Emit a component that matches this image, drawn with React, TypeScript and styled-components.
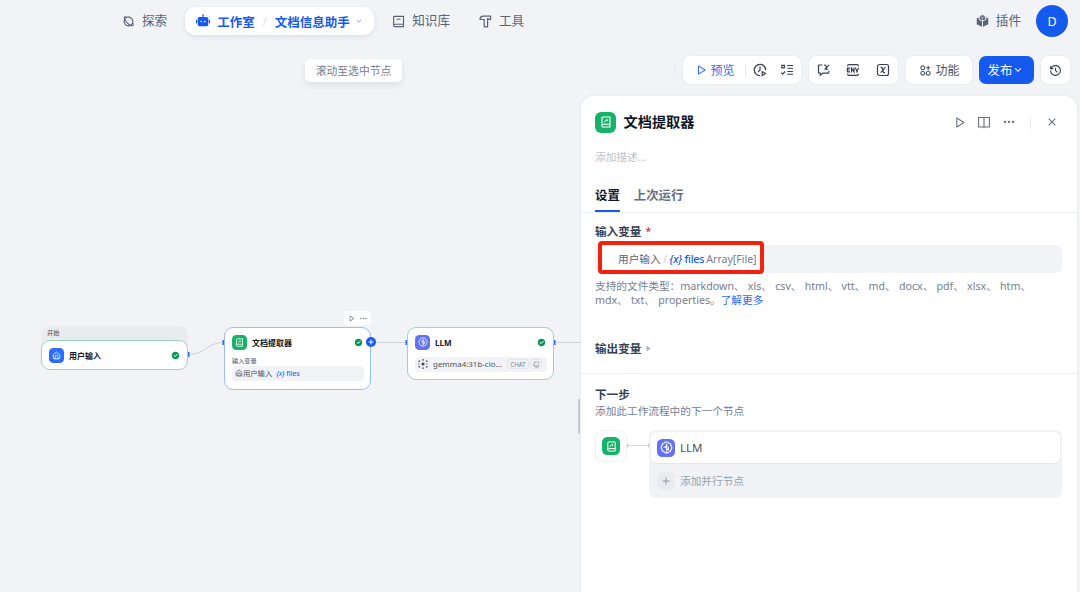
import React from "react";
import styled, { createGlobalStyle, css } from "styled-components";
import {
  RiApps2AddLine,
  RiArrowDownSLine,
  RiCheckboxCircleFill,
  RiCloseLine,
  RiHistoryLine,
  RiMoreFill,
  RiPlanetLine,
  RiPlayLargeLine,
  RiRobot2Fill,
} from "react-icons/ri";

const Global = createGlobalStyle`
  *, *::before, *::after { box-sizing: border-box; }
  html, body { margin: 0; height: 100%; overflow: hidden; }
  body {
    background: #f1f3f7;
    color: #354052;
    font-family: "Noto Sans", "Noto Sans CJK SC", sans-serif;
    font-size: 10.67px;
  }
  svg { display: block; flex: none; }
`;

const Page = styled.div`
  display: flex;
  flex-direction: column;
  width: 1080px;
  height: 592px;
  overflow: hidden;
`;

/* ---------- header ---------- */
const Header = styled.header`
  display: flex;
  align-items: center;
  height: 42px;
  padding: 0 12px 0 122px;
  flex: none;
`;
const NavItem = styled.a<{ $gap?: number; $ml?: number }>`
  display: flex;
  align-items: center;
  gap: ${(p) => p.$gap ?? 7}px;
  margin-left: ${(p) => p.$ml ?? 0}px;
  color: #5a6475;
  font-size: 12.6px;
  line-height: 18px;
  white-space: nowrap;
`;
const ActiveNav = styled.div`
  display: flex;
  align-items: center;
  width: 189px;
  height: 28px;
  margin-left: 18px;
  padding: 0 8px 0 11px;
  border-radius: 10px;
  background: #fff;
  box-shadow: 0 2px 5px rgba(16, 24, 40, 0.09);
  color: #155aef;
  font-size: 12.5px;
  font-weight: 700;
  white-space: nowrap;
`;
const ActiveLabel = styled.span`
  margin-left: 7px;
`;
const AppLabel = styled.span`
  margin-right: 4px;
`;
const Slash = styled.span`
  width: 20px;
  text-align: center;
  color: #dfe2e9;
  font-weight: 400;
`;
const Spacer = styled.div`
  flex: 1;
`;
const Avatar = styled.div`
  display: flex;
  align-items: center;
  justify-content: center;
  width: 32px;
  height: 32px;
  margin-left: 15px;
  border-radius: 50%;
  background: #155aef;
  color: #fff;
  font-size: 12.5px;
`;

/* ---------- toolbar ---------- */
const Toolbar = styled.div`
  display: flex;
  align-items: center;
  height: 54px;
  padding: 2px 10px 0 305px;
  flex: none;
`;
const ScrollChip = styled.button`
  width: 97px;
  height: 23px;
  padding: 0;
  border: 0;
  border-radius: 5px;
  background: #fff;
  box-shadow: 0 3px 6px rgba(16, 24, 40, 0.09);
  color: #767e90;
  font: inherit;
  font-size: 10.8px;
`;
const Group = styled.div<{ $w: number; $ml?: number }>`
  display: flex;
  align-items: center;
  width: ${(p) => p.$w}px;
  height: 28px;
  margin-left: ${(p) => p.$ml ?? 8}px;
  border-radius: 7px;
  background: #fff;
  box-shadow: 0 0 1.5px rgba(16, 24, 40, 0.12);
  color: #354052;
`;
const Cell = styled.span<{ $w: number }>`
  display: flex;
  justify-content: center;
  width: ${(p) => p.$w}px;
`;
const PreviewButton = styled.span`
  display: flex;
  align-items: center;
  gap: 4px;
  width: 62px;
  padding-left: 12px;
  color: #2f6cf1;
  font-size: 12px;
  white-space: nowrap;
`;
const Rule = styled.i<{ $h: number }>`
  width: 1px;
  height: ${(p) => p.$h}px;
  background: #e6e8ec;
`;
const Feature = styled.span`
  display: flex;
  align-items: center;
  gap: 4px;
  padding-left: 13px;
  color: #495464;
  font-size: 12px;
`;
const Publish = styled.button`
  display: flex;
  align-items: center;
  justify-content: center;
  width: 55px;
  height: 28px;
  margin-left: 7px;
  padding: 0;
  border: 0;
  border-radius: 7px;
  background: #155aef;
  color: #fff;
  font: inherit;
  font-size: 12.4px;
`;

/* ---------- canvas ---------- */
const Workspace = styled.div`
  display: flex;
  flex: 1;
  min-height: 0;
  padding-right: 3px;
`;
const Canvas = styled.div`
  position: relative;
  flex: 1;
  overflow: hidden;
`;
const Edges = styled.svg`
  position: absolute;
  left: 0;
  top: 0;
`;
const StartWrap = styled.div`
  position: absolute;
  left: 41px;
  top: 230px;
  width: 147px;
  height: 44px;
  border-radius: 9px;
  background: #e9ebee;
`;
const StartLabel = styled.div`
  height: 14px;
  padding: 1px 0 0 6px;
  color: #5a6475;
  font-size: 6.2px;
  font-weight: 500;
  line-height: 12px;
`;
const nodeBox = css`
  border: 1px solid #9bd6ba;
  border-radius: 9px;
  background: #fff;
`;
const StartNode = styled.div`
  ${nodeBox}
  height: 30px;
  padding: 6.5px 7px 0;
`;
const Node = styled.div<{ $x: number; $h: number; $selected?: boolean }>`
  ${nodeBox}
  position: absolute;
  left: ${(p) => p.$x}px;
  top: 231px;
  width: 147px;
  height: ${(p) => p.$h}px;
  padding: 6.5px 7px;
  border-color: ${(p) => (p.$selected ? "#9dbdf8" : "#9bd6ba")};
`;
const NodeHead = styled.div`
  display: flex;
  align-items: center;
  height: 15px;
  gap: 5px;
  color: #101828;
  font-size: 8px;
  font-weight: 700;
  white-space: nowrap;
`;
const Tile = styled.span<{ $size: number; $bg: string }>`
  display: flex;
  align-items: center;
  justify-content: center;
  flex: none;
  width: ${(p) => p.$size}px;
  height: ${(p) => p.$size}px;
  border-radius: ${(p) => p.$size * 0.29}px;
  background: ${(p) => p.$bg};
  color: #fff;
`;
const NodeLabel = styled.div`
  margin-top: 6px;
  height: 9px;
  color: #676f83;
  font-size: 6.2px;
  font-weight: 500;
  line-height: 9px;
`;
const NodeField = styled.div<{ $mt?: number }>`
  display: flex;
  align-items: center;
  height: 15px;
  width: 132px;
  margin-top: ${(p) => p.$mt ?? 1}px;
  padding: 0 3px;
  border-radius: 4px;
  background: #f1f3f6;
  color: #495464;
  font-size: 7.3px;
  white-space: nowrap;
`;
const VarName = styled.span<{ $ml?: number }>`
  margin-left: ${(p) => p.$ml ?? 0}px;
  color: #155aef;
  letter-spacing: -0.1px;
`;
const ModelName = styled.span`
  width: 74px;
  margin-left: 5px;
  font-size: 7.95px;
`;
const Badge = styled.span<{ $w: number }>`
  display: flex;
  align-items: center;
  justify-content: center;
  width: ${(p) => p.$w}px;
  height: 10px;
  margin-right: 1px;
  border: 1px solid #e2e5ea;
  border-radius: 3px;
  color: #767e90;
  font-size: 6.2px;
`;
const NodeTools = styled.div`
  position: absolute;
  left: 344px;
  top: 215px;
  display: flex;
  align-items: center;
  justify-content: center;
  gap: 4px;
  width: 27px;
  height: 14px;
  border-radius: 4px;
  background: #fff;
  color: #676f83;
`;
const AddDot = styled.span`
  position: absolute;
  left: 366px;
  top: 241px;
  display: flex;
  align-items: center;
  justify-content: center;
  width: 10px;
  height: 10px;
  border-radius: 50%;
  background: #155aef;
`;
const ResizeHandle = styled.i`
  position: absolute;
  left: 578px;
  top: 303px;
  width: 2px;
  height: 35px;
  border-radius: 1px;
  background: #c3c7cf;
`;

/* ---------- panel ---------- */
const Panel = styled.aside`
  width: 496px;
  flex: none;
  border-radius: 13px 13px 0 0;
  background: #fff;
  box-shadow: 0 0 3px rgba(16, 24, 40, 0.07);
`;
const PanelHead = styled.div`
  display: flex;
  align-items: center;
  height: 22px;
  margin: 15px 13px 0 14px;
  color: #676f83;
`;
const PanelTitle = styled.h1`
  flex: 1;
  margin: 0 0 0 7.5px;
  color: #101828;
  font-size: 14.2px;
  line-height: 22px;
  font-weight: 700;
`;
const Actions = styled.div`
  display: flex;
  align-items: center;
`;
const Description = styled.div`
  margin: 16px 14px 0;
  height: 17px;
  color: #bcc1cb;
  font-size: 10.67px;
  line-height: 17px;
`;
const Tabs = styled.div`
  display: flex;
  gap: 14px;
  height: 38px;
  margin-top: 9px;
  padding: 0 14px;
  border-bottom: 1px solid #eceef1;
`;
const Tab = styled.div<{ $active?: boolean }>`
  height: 37px;
  padding-top: 7px;
  border-bottom: 2px solid ${(p) => (p.$active ? "#155aef" : "transparent")};
  color: ${(p) => (p.$active ? "#101828" : "#676f83")};
  font-size: 12.4px;
  font-weight: 700;
  line-height: 27px;
`;
const Section = styled.section<{ $h?: number }>`
  ${(p) => p.$h && css`height: ${p.$h}px; border-bottom: 1px solid #eceef1;`}
  padding: 9px 14px 0;
`;
const FieldTitle = styled.div`
  display: flex;
  align-items: center;
  height: 17px;
  color: #354052;
  font-size: 11.6px;
  font-weight: 700;
`;
const Required = styled.span`
  margin-left: 4px;
  color: #d92d20;
  font-size: 10.5px;
  font-weight: 500;
`;
const VarField = styled.div`
  display: flex;
  align-items: center;
  height: 28px;
  width: 467px;
  margin-top: 6px;
  border-radius: 6px;
  background: #f1f3f6;
`;
const Highlight = styled.div`
  display: flex;
  align-items: center;
  flex: none;
  width: 166px;
  height: 33px;
  margin: -4px 0 -1px 3px;
  padding: 2px 0 0 16px;
  border: 4px solid #f6200f;
  border-radius: 4px;
  background: #fff;
  color: #5a6475;
  font-size: 10.67px;
  white-space: nowrap;
`;
const Divider = styled.span`
  margin: 0 2.5px;
  color: #c8ccd4;
`;
const FieldVar = styled.span`
  margin-right: 2px;
  color: #155aef;
  font-weight: 500;
  letter-spacing: -0.2px;
`;
const TypeName = styled.span`
  color: #767e90;
  letter-spacing: -0.05px;
`;
const Help = styled.div`
  margin-top: 5px;
  color: #767e90;
  font-size: 10.67px;
  word-spacing: 0.4px;
`;
const HelpLine = styled.div`
  display: flex;
  align-items: center;
  height: 14.3px;
  white-space: nowrap;
`;
const HelpLink = styled.a`
  color: #2f6cf1;
`;
const OutputTitle = styled(FieldTitle)`
  margin-top: 33px;
  gap: 5px;
`;
const NextTitle = styled(FieldTitle)`
  margin-top: 2px;
`;
const NextHint = styled.div`
  height: 18px;
  color: #767e90;
  font-size: 10.67px;
  line-height: 19px;
`;
const NextRow = styled.div`
  display: flex;
  margin-top: 10px;
`;
const CurrentNode = styled.div`
  display: flex;
  align-items: center;
  justify-content: center;
  width: 32px;
  height: 32px;
  border: 1px solid #f0f1f4;
  border-radius: 8px;
  background: #fff;
`;
const NextList = styled.div`
  flex: none;
  width: 413px;
  height: 68px;
  padding: 2px;
  border-radius: 7px;
  background: #f0f2f5;
`;
const NextItem = styled.div`
  display: flex;
  align-items: center;
  height: 31px;
  padding-left: 6px;
  gap: 5px;
  border-radius: 6px;
  background: #fff;
  box-shadow: 0 1px 1px rgba(16, 24, 40, 0.05);
  color: #495464;
  font-size: 11.5px;
`;
const AddParallel = styled.div`
  display: flex;
  align-items: center;
  height: 35px;
  padding-left: 6px;
  gap: 5px;
  color: #98a0ae;
`;

/* ---------- drawings ---------- */
const BookIcon = () => (
  <svg width="13" height="13" viewBox="0 0 13 13" fill="none" stroke="currentColor" strokeWidth="1.15">
    <path d="M1.600 10.300V2.400c0-.7.300-1 1-1h8.900v10.200H2.900c-.8 0-1.300-.5-1.300-1.200s.5-1.200 1.300-1.200h8.600M4.600 4.200h3.900" />
  </svg>
);
const HomeIcon = ({ s }: { s: number }) => (
  <svg width={s} height={s} viewBox="0 0 12 12" fill="none" stroke="currentColor" strokeWidth="1.1">
    <path d="M1.700 5 6 1.400 10.300 5v4.200c0 .9-.4 1.300-1.300 1.300H3c-.9 0-1.300-.4-1.300-1.300Z" />
    <path d="M4.200 10.500V7.300a1.800 1.800 0 0 1 3.600 0v3.200" />
  </svg>
);
const ExtractIcon = ({ s }: { s: number }) => (
  <svg width={s} height={s} viewBox="0 0 12 12" fill="none" stroke="currentColor" strokeWidth="1.05">
    <path d="M2 9.800V2.200C2 1.500 2.400 1 3.100 1H10v10H3.100C2.400 11 2 10.500 2 9.800ZM2 9.500c0-.8.500-1.200 1.200-1.200H10" />
    <path d="M4.600 6.300c0-1.400.6-2 1.600-2h1.300M6.500 3.100l1.200 1.200-1.200 1.100" strokeWidth=".9" />
  </svg>
);
const LlmIcon = ({ s }: { s: number }) => (
  <svg width={s} height={s} viewBox="0 0 14 14" fill="none" stroke="currentColor" strokeWidth="1.2">
    <path d="M7 1.300C5.800.9 4.700 1.400 4.200 2.400 2.800 2.600 2 3.700 2.300 5 1 5.900.9 7.800 2.100 8.800c-.2 1.500.8 2.600 2.200 2.800.6 1 1.600 1.400 2.700 1.100 1.100.3 2.100-.1 2.700-1.100 1.400-.2 2.400-1.300 2.200-2.800 1.200-1 1.100-2.900-.2-3.800.3-1.300-.5-2.400-1.900-2.600C9.300 1.400 8.200.9 7 1.300Z" />
    <path d="M7.200 3v8.500M7.200 5 5 6.800h2.200M7.200 9H9V6" />
  </svg>
);
const HammerIcon = () => (
  <svg width="13" height="13" viewBox="0 0 13 13" fill="none" stroke="currentColor" strokeWidth="1.2" strokeLinejoin="round">
    <path d="M.9 4.200C1.300 2.200 2.300 1.200 4 1.200h7.600v3.200H9.900l-1.300-.8v8.200H5.200V4.500H3.300Z" />
  </svg>
);
const CubesIcon = () => (
  <svg width="13" height="14" viewBox="0 0 14 14" fill="currentColor">
    <path d="M7 .5 10 2v3L7 6.500 4 5V2Z" />
    <path d="m.8 4.200 2.200-1V5.600L6.500 7.300v6L.8 10.500ZM13.200 4.200l-2.200-1V5.600L7.500 7.300v6l5.700-2.800Z" />
    <path d="m4 2 3 1.500L10 2M7 3.500v3" stroke="#f1f3f7" strokeWidth=".6" fill="none" />
  </svg>
);
const ClockPlayIcon = () => (
  <svg width="14" height="14" viewBox="0 0 14 14" fill="none" stroke="currentColor" strokeWidth="1.25">
    <path d="M7.200 12.700A5.700 5.700 0 1 1 12.700 7M7 3.500v3.800l-2 1.500" />
    <path d="M9.200 8.600v3.900l3.300-1.950Z" strokeWidth="1.100" />
  </svg>
);
const ChecklistIcon = () => (
  <svg width="14" height="14" viewBox="0 0 14 14" fill="none" stroke="currentColor" strokeWidth="1.15">
    <path d="M1.800 2.300h2.600v2.500H1.800zM1.200 9.700l1.400 1.400 2.500-2.600M7.300 2.500H13M7.300 5.200H13M7.300 8.500H13M7.300 11.200H13" />
  </svg>
);
const ChatVarIcon = () => (
  <svg width="14" height="14" viewBox="0 0 14 14" fill="none" stroke="currentColor" strokeWidth="1.2">
    <path d="M5.500 2H2.500c-.7 0-1 .3-1 1v6.200c0 .7.300 1 1 1h.7v2L6 10.200h4.800c.7 0 1-.3 1-1V8" />
    <path d="M7.200 2.100h.8c.6 0 .8.300 1 1l.5 2.500c.1.600.4.900 1 .9h.7M12.300 2c-1.200 0-3.500 4.500-4.900 4.500" />
  </svg>
);
const EnvIcon = () => (
  <svg width="14" height="14" viewBox="0 0 14 14" fill="none" stroke="currentColor" strokeWidth="1.200">
    <path d="M1.500 3.300c0-1.300.3-1.600 1.500-1.600h8c1.200 0 1.500.3 1.500 1.600M1.500 10.700c0 1.300.3 1.600 1.500 1.600h8c1.200 0 1.500-.3 1.500-1.600" />
    <path d="M4 5.100H1.400v3.800H4M1.400 7H3.800M5.500 9.400V5.200l2.500 3.600V4.600M9.400 4.600l1.600 4.200 1.600-4.200" />
  </svg>
);
const GlobalVarIcon = () => (
  <svg width="14" height="14" viewBox="0 0 14 14" fill="none" stroke="currentColor" strokeWidth="1.2">
    <rect x="1.500" y="1.500" width="11" height="11" rx="2" />
    <path d="M4.500 4.300h.7c.6 0 .9.300 1.100.9l1 3.500c.2.600.5.900 1.100.9h.7M9.500 4.300c-1.400 0-3.500 5.300-5 5.300" />
  </svg>
);
const SplitIcon = () => (
  <svg width="14" height="14" viewBox="0 0 14 14" fill="none" stroke="currentColor" strokeWidth="1.1">
    <path d="M1.500 2.500h11v9.500h-11zM7 2.500v10.800" />
  </svg>
);
const ModelIcon = () => (
  <svg width="10" height="10" viewBox="0 0 10 10" fill="none" stroke="#354052" strokeWidth="1.100">
    <path d="M1 3V2.200l1-.6M4.200.9h1.600M8 1.600l1 .6V3M9 4.400v1.200M9 7v.8l-1 .6M5.800 9.100H4.200M2 8.400l-1-.6V7M1 5.600V4.400" />
    <circle cx="5" cy="5" r="1" fill="#354052" />
  </svg>
);
const VisionIcon = () => (
  <svg width="7" height="7" viewBox="0 0 8 8" fill="none" stroke="currentColor" strokeWidth=".8">
    <path d="M4.200.8A3.200 3.200 0 1 0 7.200 4.500M2.500 4.300c.7 1.500 2.300 1.500 3 0M5 1l2 1.500M7 1 5.500 2.700" />
  </svg>
);
const PlusIcon = ({ s }: { s: number }) => (
  <svg width={s} height={s} viewBox="0 0 8 8" fill="none" stroke="currentColor">
    <path d="M4 .5v7M.5 4h7" />
  </svg>
);
const Caret = () => (
  <svg width="5" height="7" viewBox="0 0 5 7" fill="#a9b0bd"><path d="M.5.5v6l4-3Z" /></svg>
);
const Connector = () => (
  <svg width="22" height="32" viewBox="0 0 22 32" stroke="#c3c8d1" fill="none">
    <path d="M0 15.500h22" stroke="#d5d8df" />
    <path d="M.5 13.500v4M21.500 13.500v4" />
  </svg>
);

export default function App() {
  return (
    <>
      <Global />
      <Page>
        <Header>
          <NavItem><RiPlanetLine size={13} />探索</NavItem>
          <ActiveNav>
            <RiRobot2Fill size={14} />
            <ActiveLabel>工作室</ActiveLabel>
            <Slash>/</Slash>
            <AppLabel>文档信息助手</AppLabel>
            <RiArrowDownSLine size={10} color="#8fb0f7" />
          </ActiveNav>
          <NavItem $ml={18}><BookIcon />知识库</NavItem>
          <NavItem $ml={29}><HammerIcon />工具</NavItem>
          <Spacer />
          <NavItem $gap={7}><CubesIcon />插件</NavItem>
          <Avatar>D</Avatar>
        </Header>

        <Toolbar>
          <ScrollChip>滚动至选中节点</ScrollChip>
          <Spacer />
          <Rule $h={10} />
          <Group $w={118}>
            <PreviewButton><RiPlayLargeLine size={12} />预览</PreviewButton>
            <Rule $h={13} />
            <Cell $w={28}><ClockPlayIcon /></Cell>
            <Cell $w={26}><ChecklistIcon /></Cell>
          </Group>
          <Group $w={89}>
            <Cell $w={30}><ChatVarIcon /></Cell>
            <Cell $w={29}><EnvIcon /></Cell>
            <Cell $w={30}><GlobalVarIcon /></Cell>
          </Group>
          <Group $w={66}>
            <Feature><RiApps2AddLine size={13} />功能</Feature>
          </Group>
          <Publish>发布<RiArrowDownSLine size={12} /></Publish>
          <Group $w={29} $ml={7.5}>
            <Cell $w={29}><RiHistoryLine size={13} /></Cell>
          </Group>
        </Toolbar>

        <Workspace>
          <Canvas>
            <Edges width="581" height="496" viewBox="0 96 581 496" fill="none">
              <path d="M188 354.500c18 0 18-12 36-12M372 342.500h35M554 342.500h27" stroke="#cdd1d9" />
            </Edges>
            <StartWrap>
              <StartLabel>开始</StartLabel>
              <StartNode>
                <NodeHead>
                  <Tile $size={15} $bg="#296dff"><HomeIcon s={9} /></Tile>
                  用户输入
                  <Spacer />
                  <RiCheckboxCircleFill size={9} color="#079455" />
                </NodeHead>
              </StartNode>
            </StartWrap>
            <Node $x={224} $h={63} $selected>
              <NodeHead>
                <Tile $size={15} $bg="#17b26a"><ExtractIcon s={9} /></Tile>
                文档提取器
                <Spacer />
                <RiCheckboxCircleFill size={9} color="#079455" />
              </NodeHead>
              <NodeLabel>输入变量</NodeLabel>
              <NodeField>
                <HomeIcon s={8} />
                用户输入
                <VarName $ml={4}><i>{"{x}"}</i> files</VarName>
              </NodeField>
            </Node>
            <Node $x={407} $h={53}>
              <NodeHead>
                <Tile $size={15} $bg="#6172f3"><LlmIcon s={10} /></Tile>
                LLM
                <Spacer />
                <RiCheckboxCircleFill size={9} color="#079455" />
              </NodeHead>
              <NodeField $mt={7}>
                <ModelIcon />
                <ModelName>gemma4:31b-clo...</ModelName>
                <Badge $w={22}>CHAT</Badge>
                <Badge $w={12}><VisionIcon /></Badge>
              </NodeField>
            </Node>
            <Edges width="581" height="496" viewBox="0 96 581 496" fill="#296dff">
              <path d="M188 352h1.500v5H188zM222.500 340h1.500v5h-1.500zM405.500 340h1.500v5h-1.500zM554 340h1.500v5H554z" />
            </Edges>
            <NodeTools><RiPlayLargeLine size={7} /><RiMoreFill size={9} /></NodeTools>
            <AddDot><svg width="6" height="6" viewBox="0 0 6 6" stroke="#fff"><path d="M3 .5v5M.5 3h5" /></svg></AddDot>
            <ResizeHandle />
          </Canvas>

          <Panel>
            <PanelHead>
              <Tile $size={21} $bg="#17b26a"><ExtractIcon s={12} /></Tile>
              <PanelTitle>文档提取器</PanelTitle>
              <Actions>
                <Cell $w={24}><RiPlayLargeLine size={13} /></Cell>
                <Cell $w={25}><SplitIcon /></Cell>
                <Cell $w={25}><RiMoreFill size={14} /></Cell>
                <Cell $w={19}><Rule $h={13} /></Cell>
                <Cell $w={24}><RiCloseLine size={14} /></Cell>
              </Actions>
            </PanelHead>
            <Description>添加描述...</Description>
            <Tabs>
              <Tab $active>设置</Tab>
              <Tab>上次运行</Tab>
            </Tabs>
            <Section $h={161}>
              <FieldTitle>输入变量<Required>*</Required></FieldTitle>
              <VarField>
                <Highlight>
                  用户输入<Divider>/</Divider>
                  <FieldVar><i>{"{x}"}</i> files</FieldVar>
                  <TypeName>Array[File]</TypeName>
                </Highlight>
              </VarField>
              <Help>
                <HelpLine>支持的文件类型：markdown、 xls、 csv、 html、 vtt、 md、 docx、 pdf、 xlsx、 htm、</HelpLine>
                <HelpLine>mdx、 txt、 properties。<HelpLink>了解更多</HelpLink></HelpLine>
              </Help>
              <OutputTitle>输出变量<Caret /></OutputTitle>
            </Section>
            <Section>
              <NextTitle>下一步</NextTitle>
              <NextHint>添加此工作流程中的下一个节点</NextHint>
              <NextRow>
                <CurrentNode><Tile $size={18} $bg="#17b26a"><ExtractIcon s={11} /></Tile></CurrentNode>
                <Connector />
                <NextList>
                  <NextItem><Tile $size={18} $bg="#6172f3"><LlmIcon s={13} /></Tile>LLM</NextItem>
                  <AddParallel>
                    <Tile $size={18} $bg="#e9ebef"><IconTone><PlusIcon s={8} /></IconTone></Tile>
                    添加并行节点
                  </AddParallel>
                </NextList>
              </NextRow>
            </Section>
          </Panel>
        </Workspace>
      </Page>
    </>
  );
}

const IconTone = styled.span`
  color: #8c94a5;
`;
